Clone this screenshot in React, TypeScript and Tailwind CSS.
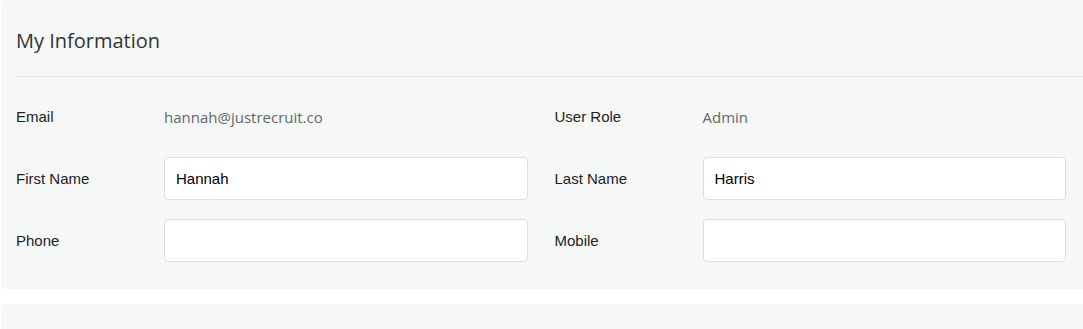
import React from 'react'

const sans = "font-['Liberation_Sans',Arial,sans-serif]"
const open = "font-['Open_Sans',sans-serif]"

export default function App() {
  return (
    <div className="w-[1083px] h-[329px] overflow-hidden bg-white">
      <section className="ml-px w-[1095px] rounded-[4px] bg-[#f6f8f8] pb-[27px]">
        <header className="ml-[14px] border-b border-[#e6e9e9] pt-[27px] pb-[21px] pl-px">
          <h2 className={`${open} text-[20px] leading-[28px] text-[#333]`}>My Information</h2>
        </header>

        <div className="pl-[15px] pt-[18px] w-[1065px] grid grid-cols-2 gap-x-[27px] gap-y-[19px]">
          <Row label="Email">
            <span className={`${open} pt-px text-[15px] text-[#666]`}>hannah@justrecruit.co</span>
          </Row>
          <Row label="User Role">
            <span className={`${open} pt-px text-[15px] text-[#666]`}>Admin</span>
          </Row>
          <Row label="First Name">
            <Field value="Hannah" />
          </Row>
          <Row label="Last Name">
            <Field value="Harris" />
          </Row>
          <Row label="Phone">
            <Field value="" />
          </Row>
          <Row label="Mobile">
            <Field value="" />
          </Row>
        </div>
      </section>

      <section className="mt-[15px] ml-px w-[1095px] h-[40px] rounded-[4px] bg-[#f6f8f8]" />
    </div>
  )
}

function Row({ label, children }: { label: string; children: React.ReactNode }) {
  return (
    <div className="grid grid-cols-[148px_1fr] items-center h-[43px]">
      <label className={`${sans} pt-[2px] text-[15px] text-[#222]`}>{label}</label>
      {children}
    </div>
  )
}

function Field({ value }: { value: string }) {
  return (
    <input
      defaultValue={value}
      className={`${sans} h-[43px] w-full rounded-[4px] border border-[#dcdedf] bg-white px-[11px] text-[15px] text-black outline-none`}
    />
  )
}
